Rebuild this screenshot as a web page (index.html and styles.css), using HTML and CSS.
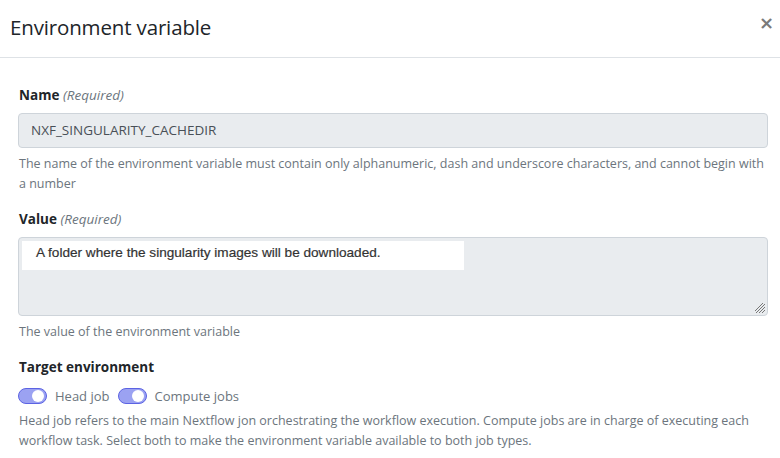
FILE: index.html
```html
<!DOCTYPE html>
<html>
<head>
<meta charset="utf-8">
<link rel="stylesheet" href="styles.css">
</head>
<body>
<div class="modal">
  <div class="modal-header">
    <h2 class="title">Environment variable</h2>
    <button class="close" aria-label="Close">&times;</button>
  </div>
  <div class="modal-body">
    <div class="field">
      <label class="label"><b>Name</b> <i>(Required)</i></label>
      <div class="input">NXF_SINGULARITY_CACHEDIR</div>
      <p class="help">The name of the environment variable must contain only alphanumeric, dash and underscore characters, and cannot begin with a number</p>
    </div>
    <div class="field">
      <label class="label"><b>Value</b> <i>(Required)</i></label>
      <div class="textarea">
        <div class="value-line">A folder where the singularity images will be downloaded.</div>
        <svg class="grip" width="10" height="10" viewBox="0 0 10 10"><path d="M10 1L1 10M10 4L4 10M10 7L7 10M10 -2L-2 10" stroke="#777" stroke-width="1"/></svg>
      </div>
      <p class="help">The value of the environment variable</p>
    </div>
    <div class="field">
      <div class="label"><b>Target environment</b></div>
      <div class="toggles">
        <span class="toggle"><span class="knob"></span></span>
        <span class="toggle-label">Head job</span>
        <span class="toggle"><span class="knob"></span></span>
        <span class="toggle-label">Compute jobs</span>
      </div>
      <p class="help">Head job refers to the main Nextflow jon orchestrating the workflow execution. Compute jobs are in charge of executing each workflow task. Select both to make the environment variable available to both job types.</p>
    </div>
  </div>
</div>
</body>
</html>
```
FILE: styles.css
```css
html, body {
  margin: 0;
  padding: 0;
  background: #fff;
}
body {
  font-family: "Open Sans", "Noto Sans", sans-serif;
  color: #212529;
  width: 780px;
  height: 458px;
  overflow: hidden;
}
.modal-header {
  display: flex;
  align-items: center;
  justify-content: space-between;
  height: 58px;
  border-bottom: 1px solid #dee2e6;
  padding: 0 6px 0 10px;
  box-sizing: border-box;
}
.title {
  margin: 0;
  font-size: 20.5px;
  font-weight: 400;
  color: #212529;
  letter-spacing: -0.15px;
  position: relative;
  top: -2px;
}
.close {
  border: 0;
  background: none;
  padding: 0;
  font-family: "DejaVu Sans", sans-serif;
  font-size: 18px;
  font-weight: 700;
  color: #7a7a7a;
  line-height: 1;
  position: relative;
  top: -6px;
}
.modal-body {
  padding: 27px 12px 0 18px;
}
.field {
  margin-bottom: 15px;
}
.label {
  display: block;
  font-size: 13.5px;
  line-height: 20px;
  margin: 0 0 8px 1px;
  color: #212529;
}
.label b {
  font-weight: 700;
}
.label i {
  color: #6c757d;
  font-weight: 400;
}
.input {
  height: 35px;
  box-sizing: border-box;
  border: 1px solid #ced4da;
  border-radius: 4px;
  background: #e9ecef;
  padding: 0 12px;
  font-size: 13.5px;
  line-height: 33px;
  color: #495057;
}
.help {
  margin: 6px 0 0 1px;
  font-size: 12.5px;
  line-height: 20px;
  color: #6c757d;
}
.textarea {
  position: relative;
  height: 79px;
  box-sizing: border-box;
  border: 1px solid #ced4da;
  border-radius: 4px;
  background: #e9ecef;
  padding: 3px 0 0 3px;
}
.value-line {
  width: 442px;
  height: 29px;
  background: #fff;
  box-sizing: border-box;
  padding: 2px 0 0 14px;
  font-family: "Liberation Sans", sans-serif;
  font-size: 13.6px;
  line-height: 20px;
  color: #333;
  -webkit-text-stroke: 0.2px #333;
}
.grip {
  position: absolute;
  right: 2px;
  bottom: 2px;
}
.toggles {
  display: flex;
  align-items: center;
  margin-top: 10px;
  height: 18px;
}
.toggle {
  display: inline-flex;
  align-items: center;
  justify-content: flex-end;
  width: 29px;
  height: 16px;
  box-sizing: border-box;
  border: 1px solid #5c63e3;
  border-radius: 8px;
  background: #9ba2f2;
  padding: 0 2px;
}
.knob {
  width: 12px;
  height: 12px;
  border-radius: 50%;
  background: #fff;
}
.toggle-label {
  font-size: 13px;
  color: #6c757d;
  margin: 0 8px 0 8px;
}
.toggles + .help {
  margin-top: 6px;
}
```
